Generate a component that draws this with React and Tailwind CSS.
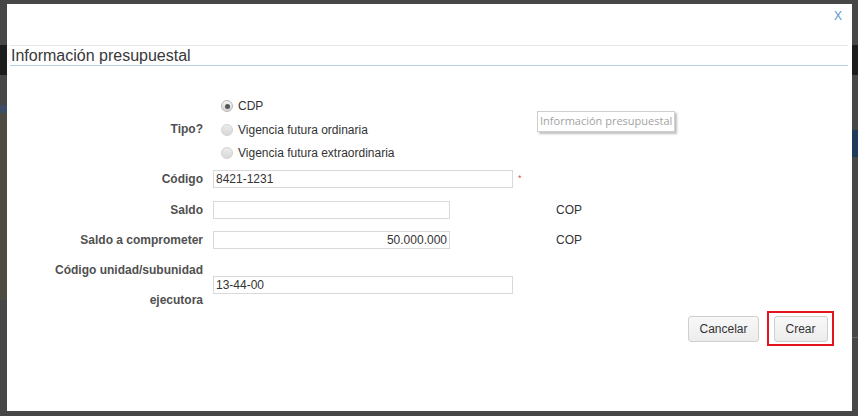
import React from "react";

const font = { fontFamily: '"Liberation Sans", Arial, sans-serif' };

function Radio({ checked, label, h }) {
  return (
    <div className={`flex items-center ${h}`}>
      <span
        className={`ml-[8px] w-[12px] h-[12px] rounded-full border flex items-center justify-center ${
          checked
            ? "border-[#b9b9b9] bg-gradient-to-b from-[#f4f4f4] to-[#d4d4d4]"
            : "border-[#d2d2d2] bg-gradient-to-b from-[#ececec] to-[#d8d8d8]"
        }`}
      >
        {checked && <span className="w-[5px] h-[5px] rounded-full bg-[#555]" />}
      </span>
      <span className="ml-[5px] text-[12px] text-[#333]">{label}</span>
    </div>
  );
}

function Label({ children, className = "" }) {
  return (
    <div className={`w-[196px] text-right font-bold text-[12px] text-[#505050] ${className}`}>
      {children}
    </div>
  );
}

function Input({ w, value = "", right }) {
  return (
    <div
      className={`${w} h-[18px] border border-[#d9d9d9] bg-white text-[12px] text-[#333] leading-[16px] px-[2px] ${
        right ? "text-right" : ""
      }`}
    >
      {value}
    </div>
  );
}

export default function App() {
  return (
    <div className="w-[858px] h-[416px] bg-[#474747] flex overflow-hidden" style={font}>
      <div className="w-[7px] flex flex-col">
        <div className="h-[45px]" />
        <div className="h-[30px] bg-[#1d1d1d]" />
        <div className="h-[30px]" />
        <div className="h-[8px] bg-[#3d4d66]" />
        <div className="h-[187px] bg-[#4e4c41]" />
      </div>
      <div className="w-[845px] flex flex-col">
        <div className="h-[4px]" />
        <div className="h-[407px] bg-white relative flex flex-col">
          <div className="h-[41px] flex justify-end pr-[10px] pt-[3px]">
            <span className="text-[12px] text-[#5a95d0]">X</span>
          </div>
          <div className="ml-[3px] mr-[4px] flex flex-col">
            <div className="h-[1px] bg-[#e6e6e6]" />
            <div className="h-[19px] flex items-center">
              <span className="text-[16px] text-[#383838] pl-[1px] leading-[19px]">Información presupuestal</span>
            </div>
            <div className="h-[1px] bg-[#b3d2ea]" />
          </div>
          <div className="h-[28px]" />
          <div className="flex flex-col">
            <div className="flex h-[70px] items-center">
              <Label>Tipo?</Label>
              <div className="ml-[10px] flex flex-col">
                <Radio checked label="CDP" h="h-[24px]" />
                <Radio label="Vigencia futura ordinaria" h="h-[23px]" />
                <Radio label="Vigencia futura extraordinaria" h="h-[23px]" />
              </div>
            </div>
            <div className="flex h-[30px] items-center">
              <Label>Código</Label>
              <div className="ml-[10px]">
                <Input w="w-[300px]" value="8421-1231" />
              </div>
              <span className="ml-[5px] self-start mt-[8px] text-[9px] text-[#e05050]">*</span>
            </div>
            <div className="flex h-[31px] items-center">
              <Label>Saldo</Label>
              <div className="ml-[10px]">
                <Input w="w-[237px]" />
              </div>
              <span className="ml-[106px] text-[12px] text-[#333]">COP</span>
            </div>
            <div className="flex h-[30px] items-center">
              <Label>Saldo a comprometer</Label>
              <div className="ml-[10px]">
                <Input w="w-[237px]" value="50.000.000" right />
              </div>
              <span className="ml-[106px] text-[12px] text-[#333]">COP</span>
            </div>
            <div className="flex h-[60px] items-center">
              <Label className="leading-[30px]">
                Código unidad/subunidad
                <br />
                ejecutora
              </Label>
              <div className="ml-[10px]">
                <Input w="w-[300px]" value="13-44-00" />
              </div>
            </div>
          </div>
          <div className="flex justify-end items-center mt-[-4px] pr-[18px]">
            <button className="w-[71px] h-[26px] rounded-[3px] border border-[#cfcfcf] bg-gradient-to-b from-[#f8f8f8] to-[#ececec] text-[12px] text-[#333]">
              Cancelar
            </button>
            <div className="ml-[8px] w-[67px] h-[35px] border-2 border-[#e3141e] flex items-center justify-center">
              <button className="w-[54px] h-[26px] rounded-[3px] border border-[#cfcfcf] bg-gradient-to-b from-[#f8f8f8] to-[#ececec] text-[12px] text-[#333]">
                Crear
              </button>
            </div>
          </div>
          <div
            className="absolute left-[530px] top-[107px] h-[21px] px-[2px] border border-[#cfcfcf] shadow-[2px_2px_2px_rgba(0,0,0,0.25)] bg-white text-[11px] text-[#a3a3a3] flex items-center"
            style={{ fontFamily: '"Open Sans", sans-serif' }}
          >
            Información presupuestal
          </div>
        </div>
      </div>
      <div className="w-[6px] flex flex-col">
        <div className="h-[45px]" />
        <div className="h-[30px] bg-[#1d1d1d]" />
        <div className="h-[55px]" />
        <div className="h-[27px] bg-[#1e3b5c]" />
        <div className="h-[180px]" />
        <div className="h-[1px] bg-[#6a6a6a]" />
      </div>
    </div>
  );
}
